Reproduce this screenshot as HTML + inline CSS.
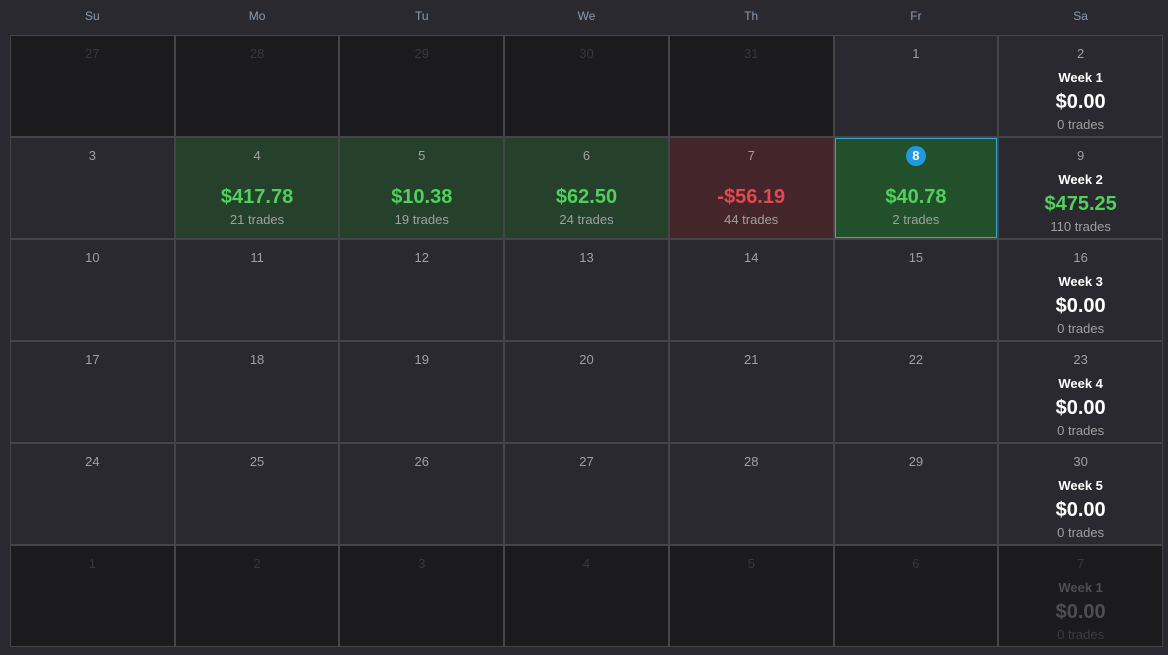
<!DOCTYPE html>
<html><head><style>
body{margin:0;width:1168px;height:655px;background:#2a292f;font-family:"Liberation Sans",sans-serif;overflow:hidden;position:relative}
.hd{position:absolute;top:0;left:10px;width:1153px;height:35px;display:grid;grid-template-columns:repeat(7,1fr)}
.hd div{text-align:center;line-height:32px;font-size:12px;color:#8d9bb0}
.g{position:absolute;left:10px;top:35px;width:1153px;height:612px;background:#454548;display:grid;grid-template-columns:repeat(7,1fr);grid-template-rows:repeat(6,1fr);gap:2px;padding:1px;box-sizing:border-box}
.c{background:#2a292f;position:relative;text-align:center;box-sizing:border-box}
.o{background:#1b1b1e}
.o .d{color:#38383c}
.gr{background:#25402b}.rd{background:#44262a}
.td{background:#21502a;border:1px solid #3aa7d9}
.d{position:absolute;top:10px;left:0;right:0;font-size:13px;color:#a0a0a0}
.w{position:absolute;top:34px;left:0;right:0;font-size:13px;font-weight:bold;color:#fff}
.a{position:absolute;left:0;right:0;font-size:20px;font-weight:bold;color:#fff}
.t{position:absolute;left:0;right:0;font-size:13px;color:#a0a0a0}
.big .a{top:48px;color:#4fd15b}.big .t{top:74px}
.wk .a{top:55px}.wk .t{top:81px}
.pos{color:#4fd15b!important}.neg{color:#e2494f!important}
.o.wk .w,.o.wk .a{color:#4e4e52}.o.wk .t{color:#3d3d40}
.badge{display:inline-block;width:20px;height:20px;border-radius:50%;background:#1e9be0;color:#fff;line-height:20px;font-weight:bold;font-size:13px;margin-top:-2px}
</style></head><body>
<div class="hd"><div>Su</div><div>Mo</div><div>Tu</div><div>We</div><div>Th</div><div>Fr</div><div>Sa</div></div>
<div class="g">
<div class="c o"><div class="d">27</div></div>
<div class="c o"><div class="d">28</div></div>
<div class="c o"><div class="d">29</div></div>
<div class="c o"><div class="d">30</div></div>
<div class="c o"><div class="d">31</div></div>
<div class="c"><div class="d">1</div></div>
<div class="c wk"><div class="d">2</div><div class="w">Week 1</div><div class="a">$0.00</div><div class="t">0 trades</div></div>

<div class="c"><div class="d">3</div></div>
<div class="c gr big"><div class="d">4</div><div class="a">$417.78</div><div class="t">21 trades</div></div>
<div class="c gr big"><div class="d">5</div><div class="a">$10.38</div><div class="t">19 trades</div></div>
<div class="c gr big"><div class="d">6</div><div class="a">$62.50</div><div class="t">24 trades</div></div>
<div class="c rd big"><div class="d">7</div><div class="a neg">-$56.19</div><div class="t">44 trades</div></div>
<div class="c td big"><div class="d" style="top:9px"><span class="badge">8</span></div><div class="a" style="top:47px">$40.78</div><div class="t" style="top:73px">2 trades</div></div>
<div class="c wk"><div class="d">9</div><div class="w">Week 2</div><div class="a pos">$475.25</div><div class="t">110 trades</div></div>

<div class="c"><div class="d">10</div></div><div class="c"><div class="d">11</div></div><div class="c"><div class="d">12</div></div><div class="c"><div class="d">13</div></div><div class="c"><div class="d">14</div></div><div class="c"><div class="d">15</div></div>
<div class="c wk"><div class="d">16</div><div class="w">Week 3</div><div class="a">$0.00</div><div class="t">0 trades</div></div>

<div class="c"><div class="d">17</div></div><div class="c"><div class="d">18</div></div><div class="c"><div class="d">19</div></div><div class="c"><div class="d">20</div></div><div class="c"><div class="d">21</div></div><div class="c"><div class="d">22</div></div>
<div class="c wk"><div class="d">23</div><div class="w">Week 4</div><div class="a">$0.00</div><div class="t">0 trades</div></div>

<div class="c"><div class="d">24</div></div><div class="c"><div class="d">25</div></div><div class="c"><div class="d">26</div></div><div class="c"><div class="d">27</div></div><div class="c"><div class="d">28</div></div><div class="c"><div class="d">29</div></div>
<div class="c wk"><div class="d">30</div><div class="w">Week 5</div><div class="a">$0.00</div><div class="t">0 trades</div></div>

<div class="c o"><div class="d">1</div></div><div class="c o"><div class="d">2</div></div><div class="c o"><div class="d">3</div></div><div class="c o"><div class="d">4</div></div><div class="c o"><div class="d">5</div></div><div class="c o"><div class="d">6</div></div>
<div class="c o wk"><div class="d">7</div><div class="w">Week 1</div><div class="a">$0.00</div><div class="t">0 trades</div></div>
</div>
</body></html>
